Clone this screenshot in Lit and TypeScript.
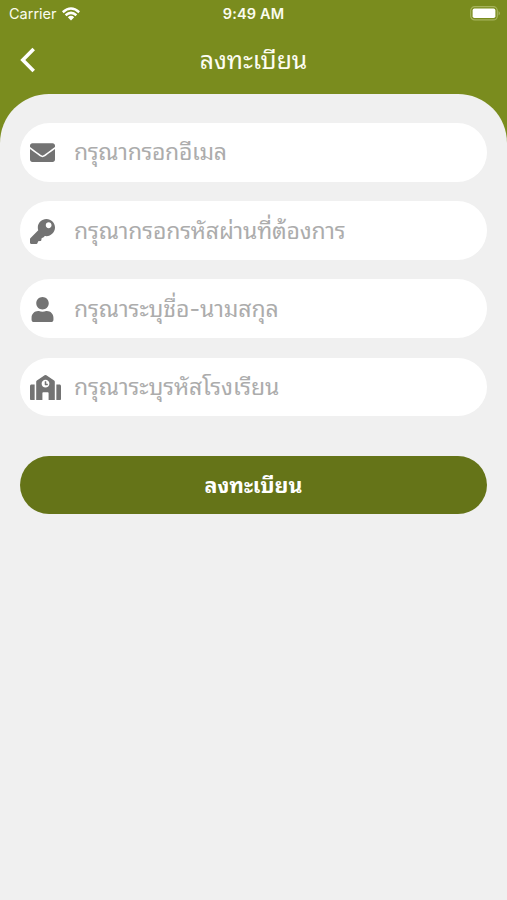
import { LitElement, html, css, svg } from "lit";
import { customElement } from "lit/decorators.js";

interface Field {
  label: string;
  icon: string;
  width: number;
  spacing: string;
  path: string;
}

const fields: Field[] = [
  {
    label: "กรุณากรอกอีเมล",
    icon: "0 0 512 512",
    width: 25,
    spacing: "-0.33px",
    path: "M502.3 190.8c3.9-3.1 9.7-.2 9.7 4.7V400c0 26.5-21.5 48-48 48H48c-26.5 0-48-21.5-48-48V195.6c0-5 5.7-7.8 9.7-4.7 22.4 17.4 52.1 39.5 154.1 113.6 21.1 15.4 56.7 47.8 92.2 47.6 35.7.3 72-32.8 92.3-47.6 102-74.1 131.6-96.3 154-113.7zM256 320c23.2.4 56.6-29.2 73.4-41.4 132.7-96.3 142.8-104.7 173.4-128.7 5.8-4.5 9.2-11.5 9.2-18.9v-19c0-26.5-21.5-48-48-48H48c-26.5 0-48 21.5-48 48v19c0 7.4 3.4 14.3 9.2 18.9 30.6 23.9 40.7 32.4 173.4 128.7 16.8 12.2 50.2 41.8 73.4 41.4z",
  },
  {
    label: "กรุณากรอกรหัสผ่านที่ต้องการ",
    icon: "0 0 512 512",
    width: 25,
    spacing: "-0.18px",
    path: "M512 176C512 273 433 352 336 352c-11 0-22-1-33-3l-24 27c-5 6-11 8-18 8l-21 4-10 50c-4 10-12 13-22 13l-40 5-14 38c-5 12-12 18-24 18H24c-13 0-24-11-24-24v-78c0-6 3-12 7-17l162-162C163 214 160 195 160 176 160 79 239 0 336 0 433 0 512 79 512 176zM323 128c0 33 26 59 59 59s59-26 59-59-26-59-59-59-59 26-59 59z",
  },
  {
    label: "กรุณาระบุชื่อ-นามสกุล",
    icon: "-32 0 512 512",
    width: 25,
    spacing: "-0.09px",
    path: "M224 256c70.7 0 128-57.3 128-128S294.7 0 224 0 96 57.3 96 128s57.3 128 128 128zm89.6 32h-16.7c-22.2 10.2-46.9 16-72.9 16s-50.6-5.8-72.9-16h-16.7C60.2 288 0 348.2 0 422.4V464c0 26.5 21.5 48 48 48h352c26.5 0 48-21.5 48-48v-41.6c0-74.2-60.2-134.4-134.4-134.4z",
  },
  {
    label: "กรุณาระบุรหัสโรงเรียน",
    icon: "0 0 640 512",
    width: 31,
    spacing: "-0.1px",
    path: "M0 224v272c0 8.84 7.16 16 16 16h80V192H32c-17.67 0-32 14.33-32 32zm360-48h-24v-40c0-4.42-3.58-8-8-8h-16c-4.42 0-8 3.58-8 8v64c0 4.42 3.58 8 8 8h48c4.42 0 8-3.58 8-8v-16c0-4.42-3.58-8-8-8zm137.75-63.96l-160-106.67a32.02 32.02 0 0 0-35.5 0l-160 106.67A32.002 32.002 0 0 0 128 138.66V512h128V368c0-8.84 7.16-16 16-16h96c8.84 0 16 7.16 16 16v144h128V138.67c0-10.7-5.35-20.69-14.25-26.63zM320 256c-44.18 0-80-35.82-80-80s35.82-80 80-80 80 35.82 80 80-35.82 80-80 80zm288-64h-64v320h80c8.84 0 16-7.16 16-16V224c0-17.67-14.33-32-32-32z",
  },
];

@customElement("app-root")
export class AppRoot extends LitElement {
  static styles = css`
    :host {
      display: flex;
      flex-direction: column;
      height: 900px;
      background: #7a8c1e;
      overflow: hidden;
      font-family: Inter, "Noto Sans Thai Looped", Loma, Garuda, Waree, "Noto Sans", sans-serif;
    }
    svg { display: block; }
    .status {
      display: grid;
      grid-template-columns: 1fr auto 1fr;
      align-items: center;
      height: 27px;
      padding: 0 6px 0 9px;
      color: #fbfcef;
      font-size: 14.5px;
    }
    .carrier { display: flex; align-items: center; gap: 5px; }
    .time { font-weight: 600; font-size: 14.5px; margin-right: 3px; letter-spacing: 0.15px; }
    .battery { justify-self: end; }
    .nav {
      display: grid;
      grid-template-columns: 60px 1fr 60px;
      align-items: center;
      height: 67px;
      box-sizing: border-box;
    }
    .back { padding: 0 0 2px 20px; }
    .title {
      text-align: center;
      color: #fdfdf2;
      font-size: 24.8px;
      line-height: 40px;
      padding-bottom: 2px;
    }
    .sheet {
      flex: 1;
      background: #f0f0f0;
      border-radius: 49px 49px 0 0;
      padding: 29px 20px 0;
      display: flex;
      flex-direction: column;
    }
    .fields { display: flex; flex-direction: column; gap: 19.5px; }
    .field {
      display: grid;
      grid-template-columns: 44px 1fr;
      align-items: center;
      height: 58.7px;
      padding-left: 10px;
      box-sizing: border-box;
      background: #fff;
      border-radius: 30px;
    }
    .icon { fill: #737373; margin-top: 1px; }
    .label {
      color: #acacac;
      font-size: 23px;
      line-height: 40px;
      white-space: nowrap;
    }
    .submit {
      margin-top: 40px;
      height: 57.5px;
      padding: 0;
      border: 0;
      border-radius: 29px;
      background: #657418;
      color: #fff;
      font-family: inherit;
      font-weight: 700;
      font-size: 21.4px;
      line-height: 40px;
    }
  `;

  render() {
    return html`
      <div class="status">
        <div class="carrier">
          <span>Carrier</span>
          <svg width="18" height="14" viewBox="0 0 18 14" fill="none" stroke="#fff" stroke-width="2.5">
            <path d="M.8 5.2Q9-2.2 17.2 5.2" />
            <path d="M3.6 8.3Q9 3.5 14.4 8.3" />
            <path d="M5.8 10.3Q9 7.4 12.2 10.3L9 13.4Z" fill="#fff" stroke="none" />
          </svg>
        </div>
        <span class="time">9:49 AM</span>
        <svg class="battery" width="31" height="15" viewBox="0 0 31 15">
          <rect x=".7" y=".7" width="26.6" height="13.2" rx="4" fill="none" stroke="#a6b35c" stroke-width="1.2" />
          <rect x="2.6" y="2.6" width="22.8" height="9.4" rx="1.8" fill="#fff" />
          <path d="M28.7 5v4.6q2-2.3 0-4.6z" fill="#b7c27c" />
        </svg>
      </div>
      <div class="nav">
        <div class="back">
          <svg width="16" height="26" viewBox="0 0 16 26" fill="none" stroke="#fff" stroke-width="3.6">
            <path d="M13.7 2 2.8 13l10.9 11" />
          </svg>
        </div>
        <div class="title">ลงทะเบียน</div>
      </div>
      <div class="sheet">
        <div class="fields">
          ${fields.map(
            (f) => html`<div class="field">
              <svg class="icon" width=${f.width} height="25" viewBox=${f.icon}>${svg`<path d=${f.path} />`}</svg>
              <span class="label" style="letter-spacing:${f.spacing}">${f.label}</span>
            </div>`
          )}
        </div>
        <button class="submit">ลงทะเบียน</button>
      </div>
    `;
  }
}
